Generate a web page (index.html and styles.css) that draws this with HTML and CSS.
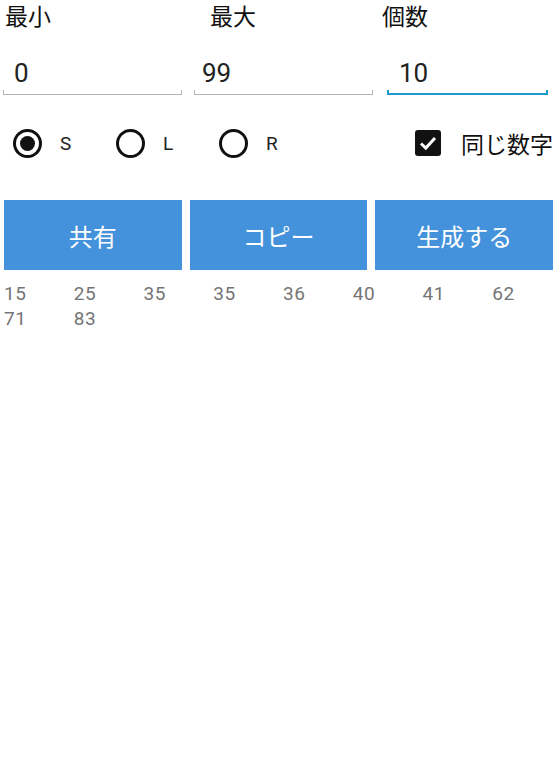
FILE: index.html
```html
<!DOCTYPE html>
<html lang="ja">
<head>
<meta charset="UTF-8">
<meta name="viewport" content="width=device-width, initial-scale=1.0">
<title>乱数生成</title>
<link rel="stylesheet" href="styles.css">
</head>
<body>

<!-- range labels -->
<div class="labels">
  <span class="label label-min">最小</span>
  <span class="label label-max">最大</span>
  <span class="label label-count">個数</span>
</div>

<div class="fields">
  <input class="field field-min" type="text" value="0">
  <input class="field field-max" type="text" value="99">
  <input class="field field-count focused" type="text" value="10">
</div>

<!-- sort order + duplicates -->
<div class="options">
  <div class="option"><span class="radio checked"></span><span class="option-text">S</span></div>
  <div class="option"><span class="radio"></span><span class="option-text">L</span></div>
  <div class="option"><span class="radio"></span><span class="option-text">R</span></div>
  <div class="check-option">
    <span class="checkbox">
      <svg width="22" height="22" viewBox="0 0 22 22"><path d="M4 11.5 L8.8 16 L18 6" fill="none" stroke="#fff" stroke-width="3"/></svg>
    </span>
    <span class="check-text">同じ数字</span>
  </div>
</div>

<div class="buttons">
  <div class="button">共有</div>
  <div class="button">コピー</div>
  <div class="button">生成する</div>
</div>

<div class="results">
  <span>15</span><span>25</span><span>35</span><span>35</span>
  <span>36</span><span>40</span><span>41</span><span>62</span>
  <span>71</span><span>83</span>
</div>

</body>
</html>
```

FILE: styles.css
```css
body {
  margin: 0;
  font-family: Roboto, "Noto Sans CJK JP", sans-serif;
  background: white;
  color: #111;
}

.labels {
  display: flex;
  height: 35px;
  line-height: 35px;
  font-size: 23px;
}

.label-min {
  margin-left: 5px;
}

.label-max {
  margin-left: 159px;
}

.label-count {
  margin-left: 126px;
}

.fields {
  display: flex;
  margin-top: 15px;
  padding-left: 3px;
}

.field {
  box-sizing: border-box;
  height: 45px;
  border: none;
  outline: none;
  padding: 0;
  font-family: Roboto, sans-serif;
  font-size: 26px;
  color: #222;
  /* holo style underline with little end ticks */
  background:
    linear-gradient(#b5b5b5, #b5b5b5) left bottom / 100% 1px no-repeat,
    linear-gradient(#b5b5b5, #b5b5b5) left bottom / 1px 5px no-repeat,
    linear-gradient(#b5b5b5, #b5b5b5) right bottom / 1px 5px no-repeat;
}

.field-min {
  width: 179px;
  padding-left: 11px;
}

.field-max {
  width: 179px;
  margin-left: 12px;
  padding-left: 8px;
}

.field-count {
  width: 161px;
  margin-left: 14px;
  padding-left: 12px;
}

.focused {
  background:
    linear-gradient(#1a9bcc, #1a9bcc) left bottom / 100% 2px no-repeat,
    linear-gradient(#1a9bcc, #1a9bcc) left bottom / 2px 5px no-repeat,
    linear-gradient(#1a9bcc, #1a9bcc) right bottom / 2px 5px no-repeat;
}

.options {
  display: flex;
  align-items: center;
  height: 50px;
  margin-top: 23px;
  padding-left: 13px;
  padding-right: 5px;
}

.option {
  display: flex;
  align-items: center;
  width: 103px;
  gap: 18px;
}

.radio {
  box-sizing: border-box;
  width: 29px;
  height: 29px;
  border: 3px solid #111;
  border-radius: 50%;
  display: flex;
  justify-content: center;
  align-items: center;
}

.radio.checked::after {
  content: "";
  width: 15px;
  height: 15px;
  border-radius: 50%;
  background: #111;
}

.option-text {
  font-size: 19px;
  color: #222;
}

.check-option {
  margin-left: auto;
  display: flex;
  align-items: center;
  gap: 20px;
}

.checkbox {
  width: 26px;
  height: 26px;
  background: #111;
  border-radius: 3px;
  display: flex;
  justify-content: center;
  align-items: center;
}

.check-text {
  font-size: 23px;
  color: #111;
}

.buttons {
  display: flex;
  gap: 8px;
  margin-top: 32px;
  padding: 0 5px 0 4px;
}

.button {
  flex: 1;
  height: 70px;
  background: #4592dc;
  color: white;
  font-size: 24px;
  display: flex;
  justify-content: center;
  align-items: center;
}

.results {
  display: grid;
  grid-template-columns: repeat(8, 1fr);
  margin-top: 11px;
  font-size: 19px;
  line-height: 25px;
  letter-spacing: 0.5px;
  color: #757575;
}

.results span {
  padding-left: 4px;
}
```
